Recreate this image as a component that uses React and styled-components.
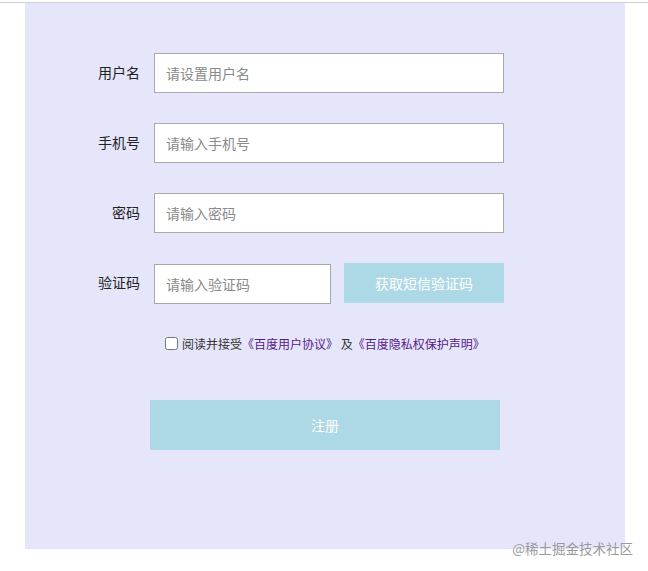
import React, { useState } from "react";
import styled, { createGlobalStyle } from "styled-components";

const GlobalStyle = createGlobalStyle`
  html, body {
    margin: 0;
    padding: 0;
    background: #fff;
    font-family: "Noto Sans CJK SC", "Noto Sans", sans-serif;
  }
`;

const Page = styled.div`
  position: relative;
  width: 648px;
  height: 571px;
  overflow: hidden;
  padding-top: 2px;
  box-sizing: border-box;
`;

const TopRule = styled.div`
  height: 1px;
  background: #cfcfcf;
`;

const Panel = styled.div`
  width: 600px;
  height: 546px;
  margin-left: 25px;
  background: #e6e6fa;
  box-sizing: border-box;
  padding: 50px 0 0 55px;
  display: flex;
  flex-direction: column;
`;

const Row = styled.div`
  display: flex;
  align-items: center;
  height: 40px;
  margin-bottom: 30px;
`;

const Label = styled.label`
  width: 60px;
  text-align: right;
  margin-right: 14px;
  font-size: 14px;
  line-height: 18px;
  margin-bottom: 2px;
  color: #222;
`;

const Input = styled.input`
  width: ${(p) => p.$w || 350}px;
  height: 40px;
  box-sizing: border-box;
  border: 1px solid #a9a9a9;
  background: #fff;
  padding: 0 11px 1px;
  font-family: inherit;
  font-size: 14px;
  color: #333;
  outline: none;
  margin-top: ${(p) => (p.$nudge ? 2 : 0)}px;
  &::placeholder {
    color: #8a8a8a;
  }
`;

const CodeButton = styled.button`
  width: 160px;
  height: 40px;
  margin-left: 13px;
  border: none;
  background: #add8e6;
  color: #fff;
  font-family: inherit;
  font-size: 14px;
  cursor: pointer;
`;

const Agree = styled.div`
  display: flex;
  align-items: center;
  margin: 2px 0 0 85px;
  font-size: 12px;
  color: #333;
`;

const Check = styled.input`
  width: 13px;
  height: 13px;
  margin: 0 4px 0 0;
`;

const Link = styled.a`
  color: #551a8b;
  text-decoration: none;
`;

const Submit = styled.button`
  width: 350px;
  height: 50px;
  margin: 48px 0 0 70px;
  border: none;
  background: #add8e6;
  color: #fff;
  font-family: inherit;
  font-size: 14px;
  cursor: pointer;
`;

const Watermark = styled.div`
  position: absolute;
  right: 15px;
  top: 538px;
  font-size: 13.5px;
  color: #9a9a9a;
`;

function App() {
  const [form, setForm] = useState({ name: "", phone: "", pwd: "", code: "" });
  const [agree, setAgree] = useState(false);

  const handleChange = (e) => {
    setForm({ ...form, [e.target.name]: e.target.value });
  };

  return (
    <Page>
      <GlobalStyle />
      <TopRule />
      <Panel>
        <Row>
          <Label htmlFor="name">用户名</Label>
          <Input id="name" name="name" placeholder="请设置用户名" value={form.name} onChange={handleChange} />
        </Row>
        <Row>
          <Label htmlFor="phone">手机号</Label>
          <Input id="phone" name="phone" placeholder="请输入手机号" value={form.phone} onChange={handleChange} />
        </Row>
        <Row>
          <Label htmlFor="pwd">密码</Label>
          <Input id="pwd" name="pwd" type="password" placeholder="请输入密码" value={form.pwd} onChange={handleChange} />
        </Row>
        <Row>
          <Label htmlFor="code">验证码</Label>
          <Input $w={177} $nudge id="code" name="code" placeholder="请输入验证码" value={form.code} onChange={handleChange} />
          <CodeButton type="button">获取短信验证码</CodeButton>
        </Row>
        <Agree>
          <Check type="checkbox" checked={agree} onChange={() => setAgree(!agree)} />
          <span>
            阅读并接受<Link href="#">《百度用户协议》</Link> 及<Link href="#">《百度隐私权保护声明》</Link>
          </span>
        </Agree>
        <Submit type="button">注册</Submit>
      </Panel>
      <Watermark>@稀土掘金技术社区</Watermark>
    </Page>
  );
}

export default App;
